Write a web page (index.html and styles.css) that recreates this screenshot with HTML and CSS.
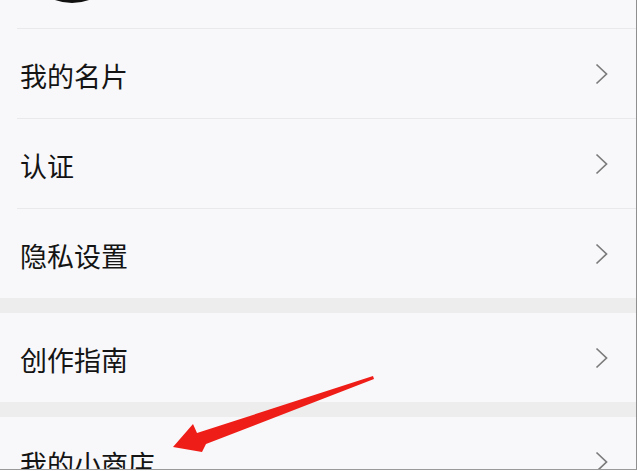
FILE: index.html
```html
<!DOCTYPE html>
<html lang="zh-CN">

<head>
    <meta charset="UTF-8">
    <meta name="viewport" content="width=device-width, initial-scale=1.0">
    <title>我</title>
    <link rel="stylesheet" href="styles.css">
</head>

<body>
    <div class="screen">
        <div class="profile">
            <div class="avatar"></div>
        </div>

        <div class="group">
            <div class="item">
                <span class="label">我的名片</span>
                <svg class="chevron" width="13" height="22" viewBox="0 0 13 22"><polyline points="1.5,1.5 11.5,11 1.5,20.5" /></svg>
            </div>
            <div class="item">
                <span class="label">认证</span>
                <svg class="chevron" width="13" height="22" viewBox="0 0 13 22"><polyline points="1.5,1.5 11.5,11 1.5,20.5" /></svg>
            </div>
            <div class="item">
                <span class="label">隐私设置</span>
                <svg class="chevron" width="13" height="22" viewBox="0 0 13 22"><polyline points="1.5,1.5 11.5,11 1.5,20.5" /></svg>
            </div>
        </div>

        <div class="group">
            <div class="item">
                <span class="label">创作指南</span>
                <svg class="chevron" width="13" height="22" viewBox="0 0 13 22"><polyline points="1.5,1.5 11.5,11 1.5,20.5" /></svg>
            </div>
        </div>

        <div class="group">
            <div class="item">
                <span class="label">我的小商店</span>
                <svg class="chevron" width="13" height="22" viewBox="0 0 13 22"><polyline points="1.5,1.5 11.5,11 1.5,20.5" /></svg>
            </div>
        </div>

        <!-- red arrow drawn on top of the screenshot -->
        <svg class="arrow" width="636" height="469" viewBox="0 0 636 469">
            <polygon points="173,447 193,424 197,433 373,376 374,379 206,444 202,452" fill="#ef1d17" />
        </svg>
    </div>
</body>

</html>
```

FILE: styles.css
```css
body {
    margin: 0;
    background-color: #fff;
    font-family: "Noto Sans CJK SC", "Noto Sans", sans-serif;
}

.screen {
    position: relative;
    width: 636px;
    height: 469px;
    overflow: hidden;
    background-color: #ededed;
    border-right: 1px solid #8f8f8f;
    border-bottom: 1px solid #9a9a9a;
    display: flex;
    flex-direction: column;
    gap: 15px;
}

.profile {
    height: 28px;
    flex-shrink: 0;
    background-color: #f8f8fa;
    overflow: hidden;
    margin-bottom: -15px;
}

.avatar {
    width: 100px;
    height: 100px;
    border-radius: 50%;
    background-color: #111;
    margin: -97px 0 0 22px;
}

.group {
    flex-shrink: 0;
    background-color: #f8f8fa;
}

.profile + .group .item:first-child {
    border-top: 1px solid #e9e9eb;
}

.item {
    display: flex;
    align-items: center;
    justify-content: space-between;
    height: 89px;
    margin-left: 17px;
    padding: 0 28px 0 3px;
}

.item + .item {
    border-top: 1px solid #e9e9eb;
}

.label {
    font-size: 27px;
    color: #141414;
    padding-top: 4px;
}

.chevron {
    fill: none;
    stroke: #7b7b7b;
    stroke-width: 1.7;
    stroke-linejoin: miter;
}

.arrow {
    position: absolute;
    top: 0;
    left: 0;
    pointer-events: none;
}
```
